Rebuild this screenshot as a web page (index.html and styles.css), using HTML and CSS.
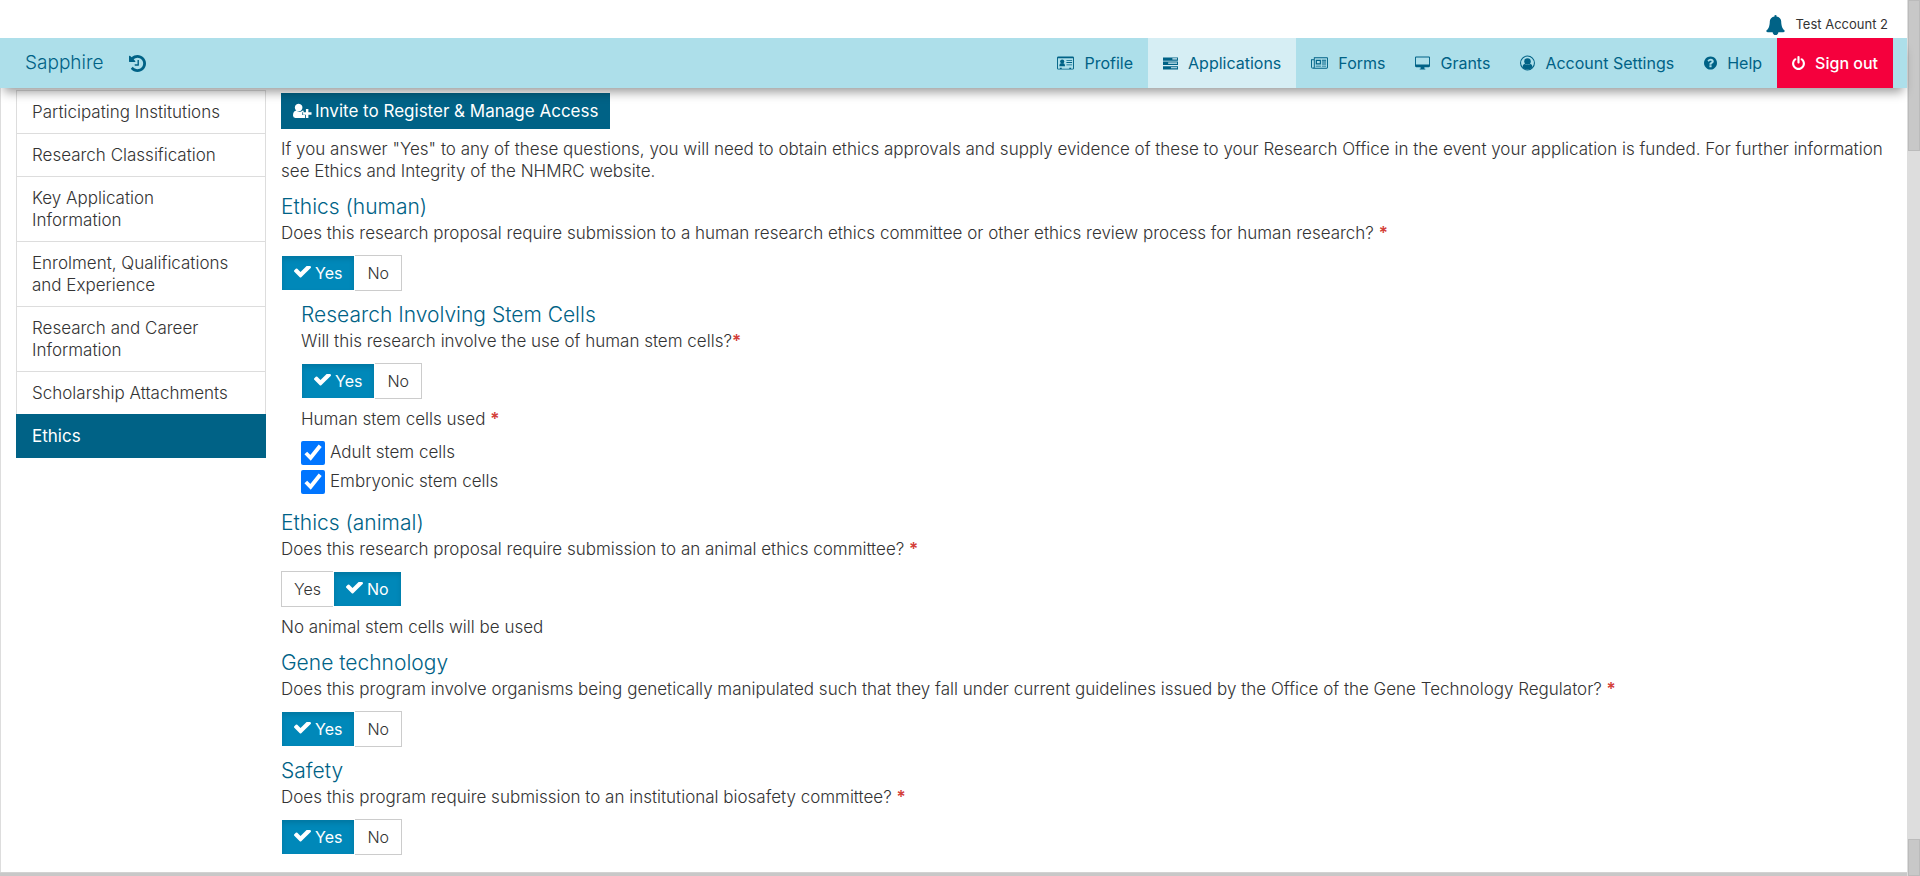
FILE: index.html
```html
<!DOCTYPE html>
<html lang="en">
<head>
<meta charset="utf-8">
<title>Sapphire - Ethics</title>
<link rel="stylesheet" href="styles.css">
</head>
<body>
<svg class="sprite" aria-hidden="true">
  <symbol id="i-check" viewBox="121 462 1550 1188"><path d="M1671 566q0 40-28 68l-724 724-136 136q-28 28-68 28t-68-28l-136-136-362-362q-28-28-28-68t28-68l136-136q28-28 68-28t68 28l294 295 656-657q28-28 68-28t68 28l136 136q28 28 28 68z"/></symbol>
  <symbol id="i-bell" viewBox="64 0 1664 1792"><path d="M1728 1408q0 52-38 90t-90 38h-448q0 106-75 181t-181 75-181-75-75-181h-448q-52 0-90-38t-38-90q50-42 91-88t85-119.500 74.500-158.500 50-206 19.500-260q0-152 117-282.500t307-158.500q-8-19-8-39 0-40 28-68t68-28 68 28 28 68q0 20-8 39 190 28 307 158.500t117 282.500q0 139 19.500 260t50 206 74.500 158.500 85 119.500 91 88z"/></symbol>
  <symbol id="i-power" viewBox="128 0 1536 1664"><path d="M1664 896q0 156-61 298t-164 245-245 164-298 61-298-61-245-164-164-245-61-298q0-182 80.500-343t226.500-270q43-32 95.500-25t83.500 50q32 42 24.500 94.500t-49.500 84.500q-98 74-151.500 181t-53.500 228q0 104 40.500 198.500t109.500 163.500 163.500 109.500 198.500 40.500 198.500-40.500 163.500-109.500 109.500-163.500 40.500-198.500q0-121-53.500-228t-151.500-181q-42-32-49.500-84.500t24.500-94.500q31-43 84-50t95 25q146 109 226.500 270t80.500 343zm-640-768v640q0 52-38 90t-90 38-90-38-38-90v-640q0-52 38-90t90-38 90 38 38 90z"/></symbol>
  <symbol id="i-help" viewBox="128 128 1536 1536"><path d="M1024 1376v-192q0-14-9-23t-23-9h-192q-14 0-23 9t-9 23v192q0 14 9 23t23 9h192q14 0 23-9t9-23zm256-672q0-88-55.500-163t-138.500-116-170-41q-243 0-371 213-15 24 8 42l132 100q7 6 19 6 16 0 25-12 53-68 86-92 34-24 86-24 48 0 85.500 26t37.500 59q0 38-20 61t-68 45q-63 28-115.500 86.500t-52.500 125.500v36q0 14 9 23t23 9h192q14 0 23-9t9-23q0-19 21.500-49.500t54.500-49.500q32-18 49-28.500t46-35 44.500-48 28-60.500 12.500-81zm384 192q0 209-103 385.500t-279.500 279.500-385.500 103-385.500-103-279.500-279.500-103-385.500 103-385.500 279.500-279.500 385.500-103 385.500 103 279.500 279.500 103 385.500z"/></symbol>
  <symbol id="i-history" viewBox="128 128 1536 1536"><path d="M1664 896q0 156-61 298t-164 245-245 164-298 61q-172 0-327-72.500t-264-204.500q-7-10-6.500-22.500t8.500-20.500l137-138q10-9 25-9 16 2 23 12 73 95 179 147t225 52q104 0 198.500-40.500t163.500-109.500 109.500-163.500 40.500-198.500-40.500-198.500-109.500-163.500-163.500-109.500-198.500-40.500q-98 0-188 35.500t-160 101.500l137 138q31 30 14 69-17 40-59 40h-448q-26 0-45-19t-19-45v-448q0-42 40-59 39-17 69 14l130 129q107-101 244.500-156.500t284.500-55.500q156 0 298 61t245 164 164 245 61 298zm-640-288v448q0 14-9 23t-23 9h-320q-14 0-23-9t-9-23v-64q0-14 9-23t23-9h224v-352q0-14 9-23t23-9h64q14 0 23 9t9 23z"/></symbol>
  <symbol id="i-card" viewBox="0 0 18 16"><path fill-rule="evenodd" d="M1.500 1h15A1.500 1.500 0 0 1 18 2.500v11a1.500 1.500 0 0 1-1.500 1.500h-15A1.500 1.500 0 0 1 0 13.500v-11A1.500 1.500 0 0 1 1.500 1zM1 3v10.500q0 .5.500.5H3v-1h2v1h8v-1h2v1h1.500q.5 0 .5-.5V3z"/><circle cx="5.500" cy="6.500" r="2.200"/><path d="M2.500 11.500c0-2 .8-3.200 1.700-3.200h2.600c.9 0 1.700 1.200 1.700 3.200zM10 5h6v1h-6zM10 7h6v1h-6zM10 9.500h6v1h-6z"/></symbol>
  <symbol id="i-tasks" viewBox="0 0 16 16"><path fill-rule="evenodd" d="M0 2h16v3.500H0zM10 3v1.200h5V3zM0 6.500h16V10H0zM5.500 7.500v1.200H15V7.500zM0 11.500h16V15H0zM8.500 12.500v1.200H15v-1.200z"/></symbol>
  <symbol id="i-news" viewBox="0 0 18 16"><path fill-rule="evenodd" d="M3 2h14q1 0 1 1v9.500q0 1.500-1.500 1.500h-14Q0 14 0 12V4h3zM1 5v7q0 1 1 1t1-1V5zm3-2v9.300q0 .4-.2.700h12.700q.5 0 .5-.5V3z"/><path fill-rule="evenodd" d="M5 4.500h5.500v5H5zm1.300 1.300v2.500h3V5.800zM11.500 4.500H16v1h-4.500zM11.500 6.500H16v1h-4.500zM11.500 8.500H16v1h-4.500zM5 10.800h5.500v1H5zM11.500 10.800H16v1h-4.500z"/></symbol>
  <symbol id="i-desktop" viewBox="0 0 16 16"><path fill-rule="evenodd" d="M1.200 1h13.600Q16 1 16 2.200v9.100q0 1.200-1.200 1.200H10V14h1v1H5v-1h1v-1.500H1.200Q0 12.500 0 11.300V2.200Q0 1 1.200 1zM1 2.500v7h14v-7q0-.5-.5-.5h-13q-.5 0-.5.500z"/></symbol>
  <symbol id="i-user" viewBox="0 0 16 16"><circle cx="8" cy="8" r="7.400" fill="none" stroke="currentColor" stroke-width="1.100"/><circle cx="8" cy="6.300" r="3.500"/><path d="M2.700 12.400c.2-2 1-3.300 2.500-3.300Q8 11.300 10.800 9.100c1.500 0 2.300 1.300 2.500 3.300Q11.200 15 8 15t-5.300-2.600z"/></symbol>
  <symbol id="i-adduser" viewBox="0 0 20 16"><path d="M7 8.200A4 4 0 1 1 7 .5a4 4 0 0 1 0 7.700zM3.500 7.500Q7 10.500 10.300 7.600q.6 0 .9.200V9.300H9.800v2.900h2.900v3.100H2.500Q0 15.300 0 12.800 0 8 3.500 7.500zM13.600 6h2.600v3.400H19.500V12h-3.300v3.300h-2.600V12h-3V9.400h3z"/></symbol>
</svg>

<div class="window">
  <div class="page">
    <header class="header">
      <div class="account">
        <svg class="bell"><use href="#i-bell"/></svg>
        <span>Test Account 2</span>
      </div>
      <nav class="bar">
        <a class="brand" href="#">Sapphire</a>
        <a class="recent" href="#" aria-label="Recent"><svg class="icon-lg"><use href="#i-history"/></svg></a>
        <div class="links">
          <a class="link" href="#"><svg class="icon-wide"><use href="#i-card"/></svg>Profile</a>
          <a class="link link-active" href="#"><svg class="icon"><use href="#i-tasks"/></svg>Applications</a>
          <a class="link" href="#"><svg class="icon-wide"><use href="#i-news"/></svg>Forms</a>
          <a class="link" href="#"><svg class="icon"><use href="#i-desktop"/></svg>Grants</a>
          <a class="link" href="#"><svg class="icon"><use href="#i-user"/></svg>Account Settings</a>
          <a class="link" href="#"><svg class="icon-slim"><use href="#i-help"/></svg>Help</a>
          <a class="link link-out" href="#"><svg class="icon-slim"><use href="#i-power"/></svg>Sign out</a>
        </div>
      </nav>
    </header>

    <div class="content">
      <aside class="steps">
        <a class="step" href="#">Participating Institutions</a>
        <a class="step" href="#">Research Classification</a>
        <a class="step" href="#">Key Application<br>Information</a>
        <a class="step" href="#">Enrolment, Qualifications<br>and Experience</a>
        <a class="step" href="#">Research and Career<br>Information</a>
        <a class="step" href="#">Scholarship Attachments</a>
        <a class="step step-active" href="#">Ethics</a>
      </aside>

      <main class="main">
        <button class="invite" type="button"><svg class="icon-invite"><use href="#i-adduser"/></svg>Invite to Register &amp; Manage Access</button>
        <p class="intro">If you answer "Yes" to any of these questions, you will need to obtain ethics approvals and supply evidence of these to your Research Office in the event your application is funded. For further information see Ethics and Integrity of the NHMRC website.</p>

        <section class="question">
          <h2 class="title">Ethics (human)</h2>
          <p class="text">Does this research proposal require submission to a human research ethics committee or other ethics review process for human research? <b class="req">*</b></p>
          <div class="toggle">
            <button class="option option-on" type="button"><svg class="tick"><use href="#i-check"/></svg>Yes</button>
            <button class="option" type="button">No</button>
          </div>
        </section>

        <section class="question nested">
          <h2 class="title">Research Involving Stem Cells</h2>
          <p class="text">Will this research involve the use of human stem cells?<b class="req">*</b></p>
          <div class="toggle">
            <button class="option option-on" type="button"><svg class="tick"><use href="#i-check"/></svg>Yes</button>
            <button class="option" type="button">No</button>
          </div>
          <p class="note">Human stem cells used <b class="req">*</b></p>
          <div class="choices">
            <label class="choice"><input class="check" type="checkbox" checked>Adult stem cells</label>
            <label class="choice"><input class="check" type="checkbox" checked>Embryonic stem cells</label>
          </div>
        </section>

        <section class="question">
          <h2 class="title">Ethics (animal)</h2>
          <p class="text">Does this research proposal require submission to an animal ethics committee? <b class="req">*</b></p>
          <div class="toggle">
            <button class="option" type="button">Yes</button>
            <button class="option option-on" type="button"><svg class="tick"><use href="#i-check"/></svg>No</button>
          </div>
          <p class="note">No animal stem cells will be used</p>
        </section>

        <section class="question">
          <h2 class="title">Gene technology</h2>
          <p class="text">Does this program involve organisms being genetically manipulated such that they fall under current guidelines issued by the Office of the Gene Technology Regulator? <b class="req">*</b></p>
          <div class="toggle">
            <button class="option option-on" type="button"><svg class="tick"><use href="#i-check"/></svg>Yes</button>
            <button class="option" type="button">No</button>
          </div>
        </section>

        <section class="question">
          <h2 class="title">Safety</h2>
          <p class="text">Does this program require submission to an institutional biosafety committee? <b class="req">*</b></p>
          <div class="toggle">
            <button class="option option-on" type="button"><svg class="tick"><use href="#i-check"/></svg>Yes</button>
            <button class="option" type="button">No</button>
          </div>
        </section>
      </main>
    </div>
    <div class="hscroll"></div>
  </div>
  <div class="vscroll"><div class="thumb thumb-top"></div><div class="thumb thumb-end"></div></div>
</div>
</body>
</html>
```
FILE: styles.css
```css
* { box-sizing: border-box; }

body {
  margin: 0;
  font: 17px/22px Inter, "Liberation Sans", sans-serif;
  font-weight: 300;
  color: #333;
  background: #fff;
}

h2, p { margin: 0; }
a { color: inherit; text-decoration: none; }
button { font: inherit; cursor: pointer; }
svg { display: block; flex: none; fill: currentColor; }
.sprite { display: none; }

.window { display: flex; min-height: 100vh; }
.page { flex: 1; min-width: 0; display: flex; flex-direction: column; }

.header { position: relative; z-index: 1; }
.account {
  display: flex;
  align-items: flex-end;
  justify-content: flex-end;
  gap: 10px;
  height: 38px;
  padding: 0 19px 3px 0;
  font-size: 13px;
  font-weight: 400;
}
.bell { width: 19px; height: 20px; color: #006286; }

.bar {
  display: flex;
  align-items: center;
  height: 50px;
  padding: 0 14px 0 25px;
  background: #addfea;
  color: #006286;
  box-shadow: 0 8px 10px -4px rgba(0, 0, 0, 0.4);
}
.brand { font-size: 19px; }
.recent { margin-left: 26px; }
.icon-lg { width: 17px; height: 17px; }
.links { display: flex; margin-left: auto; height: 50px; font-size: 16px; font-weight: 400; }
.link { display: flex; align-items: center; gap: 10px; padding: 0 15px; }
.link-active { background: #d6eef4; }
.link-out { background: #f5003d; color: #fff; font-weight: 500; }
.icon { width: 15px; height: 16px; }
.icon-wide { width: 17px; height: 16px; }
.icon-slim { width: 13px; height: 14px; }

.content {
  flex: 1;
  display: flex;
  align-items: flex-start;
  gap: 15px;
  padding: 2px 14px 16px 15px;
  border-left: 1px solid #ddd;
}

.steps { flex: none; width: 250px; }
.step {
  display: block;
  padding: 10px 15px;
  border: 1px solid #ddd;
  border-bottom: 0;
}
.step-active {
  background: #006286;
  border: 1px solid #006286;
  color: #fff;
  font-weight: 400;
}

.main { flex: 1; min-width: 0; padding-top: 3px; }
.invite {
  display: flex;
  align-items: center;
  gap: 3px;
  height: 36px;
  padding: 0 12px;
  border: 0;
  background: #006286;
  color: #fff;
  font-weight: 400;
}
.icon-invite { width: 19px; height: 16px; }
.intro { margin: 9px 0 14px; }

.question { margin-top: 13px; }
.nested { padding-left: 20px; margin-bottom: 18px; }
.title { font-size: 21px; line-height: 22px; font-weight: 300; color: #006286; }
.text { margin-top: 4px; }
.req { color: #d43f3a; font-weight: 600; }

.toggle { display: flex; margin-top: 11px; }
.option {
  display: flex;
  align-items: center;
  gap: 4px;
  height: 36px;
  padding: 0 12px;
  border: 1px solid #ccc;
  background: #fff;
  color: #333;
  font-size: 16px;
}
.option-on {
  border-color: #fff;
  background: #0088b9;
  background-clip: padding-box;
  color: #fff;
  font-weight: 400;
  box-shadow: inset 0 3px 5px rgba(0, 0, 0, 0.125);
}
.option-on + .option { border-left: 0; }
.option:has(+ .option-on) { border-right: 0; }
.tick { width: 17px; height: 13px; margin-bottom: 2px; }

.note { margin-top: 9px; }
.note:last-child { margin-bottom: 14px; }
.choices { display: flex; flex-direction: column; gap: 5px; margin-top: 11px; }
.choice { display: flex; gap: 5px; height: 24px; }
.check { width: 24px; height: 24px; margin: 0; }

.hscroll { height: 4px; background: #c8c8c8; border-top: 1px solid #d2d2d2; }
.vscroll {
  flex: none;
  width: 13px;
  display: flex;
  flex-direction: column;
  justify-content: space-between;
  padding-left: 1px;
  background: #ddd;
}
.thumb { background: #c8c8c8; border: 1px solid #bbb; }
.thumb-top { height: 151px; }
.thumb-end { height: 37px; }
```
